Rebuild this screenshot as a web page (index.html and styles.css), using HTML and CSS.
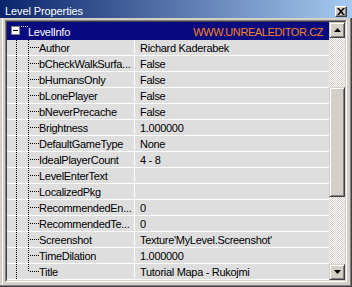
FILE: index.html
```html
<!DOCTYPE html>
<html>
<head>
<meta charset="utf-8">
<link rel="stylesheet" href="styles.css">
</head>
<body>
<div class="window">
  <div class="titlebar">
    <span class="title">Level Properties</span>
    <span class="close"><svg width="8" height="7" viewBox="0 0 8 7"><path d="M0 0h2l2 2.3L6 0h2L5 3.5 8 7H6L4 4.7 2 7H0l3-3.5z" fill="#000"/></svg></span>
  </div>
  <div class="frame">
    <div class="sunken">
      <div class="sunken-inner">
        <div class="rows">
          <div class="group">
            <span class="toggle"><svg width="9" height="9" viewBox="0 0 9 9"><rect x="0.5" y="0.5" width="8" height="8" fill="#fff" stroke="#808080"/><rect x="2" y="4" width="5" height="1" fill="#000"/></svg></span>
            <span class="group-dots"></span>
            <span class="group-name">LevelInfo</span>
            <span class="url">WWW.UNREALEDITOR.CZ</span>
          </div>
          <div class="row"><span class="name">Author</span><span class="value">Richard Kaderabek</span></div>
          <div class="row"><span class="name">bCheckWalkSurfa...</span><span class="value">False</span></div>
          <div class="row"><span class="name">bHumansOnly</span><span class="value">False</span></div>
          <div class="row"><span class="name">bLonePlayer</span><span class="value">False</span></div>
          <div class="row"><span class="name">bNeverPrecache</span><span class="value">False</span></div>
          <div class="row"><span class="name">Brightness</span><span class="value">1.000000</span></div>
          <div class="row"><span class="name">DefaultGameType</span><span class="value">None</span></div>
          <div class="row"><span class="name">IdealPlayerCount</span><span class="value">4 - 8</span></div>
          <div class="row"><span class="name">LevelEnterText</span><span class="value"></span></div>
          <div class="row"><span class="name">LocalizedPkg</span><span class="value"></span></div>
          <div class="row"><span class="name">RecommendedEn...</span><span class="value">0</span></div>
          <div class="row"><span class="name">RecommendedTe...</span><span class="value">0</span></div>
          <div class="row"><span class="name">Screenshot</span><span class="value">Texture'MyLevel.Screenshot'</span></div>
          <div class="row"><span class="name">TimeDilation</span><span class="value">1.000000</span></div>
          <div class="row last"><span class="name">Title</span><span class="value">Tutorial Mapa - Rukojmi</span></div>
        </div>
        <div class="scrollbar">
          <div class="sb-btn"><svg width="7" height="4" viewBox="0 0 7 4"><path d="M3.5 0L7 4H0z" fill="#000"/></svg></div>
          <div class="sb-track first"></div>
          <div class="sb-thumb"></div>
          <div class="sb-track rest"></div>
          <div class="sb-btn"><svg width="7" height="4" viewBox="0 0 7 4"><path d="M0 0h7L3.5 4z" fill="#000"/></svg></div>
        </div>
      </div>
    </div>
  </div>
</div>
</body>
</html>
```
FILE: styles.css
```css
body {
  margin: 0;
}

.window {
  width: 352px;
  height: 287px;
  background: #d4d0c8;
  display: flex;
  flex-direction: column;
  font-family: "Liberation Sans", Arial, sans-serif;
  font-size: 11px;
  letter-spacing: -0.3px;
  color: #000;
  box-shadow: inset -1px -1px 0 #404040, inset -2px -2px 0 #808080, inset 2px 0 0 #d4d0c8, inset 3px 0 0 #fff;
}

.titlebar {
  height: 18px;
  box-sizing: border-box;
  padding: 5px 0 0 5px;
  line-height: 13px;
  color: #fff;
  background: linear-gradient(to right, #0a246a, #a6caf0);
  display: flex;
  align-items: flex-start;
}

.title {
  letter-spacing: -0.1px;
}

.close {
  margin-left: auto;
  margin-right: 5px;
  margin-top: 1px;
  width: 12px;
  height: 11px;
  box-sizing: border-box;
  background: #d4d0c8;
  border: 1px solid;
  border-color: #fff #404040 #404040 #fff;
  box-shadow: inset -1px -1px 0 #808080;
  display: flex;
  align-items: center;
  justify-content: center;
}

.close svg {
  display: block;
}

.frame {
  flex: 1;
  padding: 2px 5px 5px 5px;
  display: flex;
}

.sunken {
  flex: 1;
  border: 1px solid;
  border-color: #808080 #fff #fff #808080;
  display: flex;
}

.sunken-inner {
  flex: 1;
  border: 1px solid;
  border-color: #404040 #d4d0c8 #d4d0c8 #404040;
  display: flex;
  background: #dedede;
  overflow: hidden;
}

.rows {
  flex: 1;
}

.group {
  height: 18px;
  background: #0a0a80;
  color: #fff;
  display: flex;
  line-height: 20px;
  white-space: nowrap;
}

.toggle {
  margin-left: 4px;
  margin-top: 4px;
  height: 9px;
}

.toggle svg {
  display: block;
}

.group-dots {
  width: 8px;
  height: 9px;
  background: repeating-linear-gradient(to right, transparent 0 1px, #fff 1px 2px) 0 4px / 8px 1px no-repeat;
}

.url {
  margin-left: auto;
  margin-right: 6px;
  color: #f5821f;
  letter-spacing: -0.4px;
}

.row {
  height: 15px;
  border-bottom: 1px solid #fff;
  display: flex;
  line-height: 17px;
  white-space: nowrap;
}

.name {
  width: 128px;
  box-sizing: border-box;
  border-right: 1px solid #fff;
  padding-left: 32px;
  overflow: hidden;
  background:
    repeating-linear-gradient(to bottom, #000 0 1px, transparent 1px 2px) 9px 0 / 1px 100% no-repeat,
    repeating-linear-gradient(to bottom, #000 0 1px, transparent 1px 2px) 21px 0 / 1px 100% no-repeat,
    repeating-linear-gradient(to right, transparent 0 1px, #000 1px 2px) 22px 7px / 10px 1px no-repeat;
}

.row.last .name {
  background:
    repeating-linear-gradient(to bottom, #000 0 1px, transparent 1px 2px) 9px 0 / 1px 100% no-repeat,
    repeating-linear-gradient(to bottom, #000 0 1px, transparent 1px 2px) 21px 0 / 1px 8px no-repeat,
    repeating-linear-gradient(to right, transparent 0 1px, #000 1px 2px) 22px 7px / 10px 1px no-repeat;
}

.value {
  padding-left: 5px;
}

.scrollbar {
  width: 16px;
  display: flex;
  flex-direction: column;
  background: repeating-conic-gradient(#d4d0c8 0 25%, #fff 0 50%) 0 0 / 2px 2px;
}

.sb-btn,
.sb-thumb {
  box-sizing: border-box;
  background: #d4d0c8;
  border: 1px solid;
  border-color: #d4d0c8 #404040 #404040 #d4d0c8;
  box-shadow: inset 1px 1px 0 #fff, inset -1px -1px 0 #808080;
}

.sb-btn {
  height: 16px;
  display: flex;
  align-items: center;
  justify-content: center;
}

.sb-btn svg {
  display: block;
}

.sb-thumb {
  height: 110px;
}

.sb-track.first {
  height: 49px;
}

.sb-track.rest {
  flex: 1;
}
```
